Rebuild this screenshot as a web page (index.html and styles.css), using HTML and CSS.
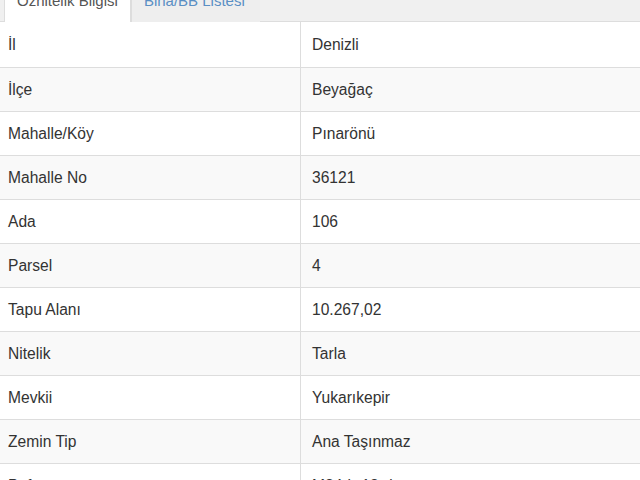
FILE: index.html
```html
<!DOCTYPE html>
<html lang="tr">
<head>
<meta charset="utf-8">
<title>Öznitelik Bilgisi</title>
<link rel="stylesheet" href="styles.css">
</head>
<body>
<nav class="tabs">
  <a class="tab active">Öznitelik Bilgisi</a>
  <a class="tab">Bina/BB Listesi</a>
</nav>
<div class="table">
  <div class="row"><div class="cell key">İl</div><div class="cell val">Denizli</div></div>
  <div class="row"><div class="cell key">İlçe</div><div class="cell val">Beyağaç</div></div>
  <div class="row"><div class="cell key">Mahalle/Köy</div><div class="cell val">Pınarönü</div></div>
  <div class="row"><div class="cell key">Mahalle No</div><div class="cell val">36121</div></div>
  <div class="row"><div class="cell key">Ada</div><div class="cell val">106</div></div>
  <div class="row"><div class="cell key">Parsel</div><div class="cell val">4</div></div>
  <div class="row"><div class="cell key">Tapu Alanı</div><div class="cell val">10.267,02</div></div>
  <div class="row"><div class="cell key">Nitelik</div><div class="cell val">Tarla</div></div>
  <div class="row"><div class="cell key">Mevkii</div><div class="cell val">Yukarıkepir</div></div>
  <div class="row"><div class="cell key">Zemin Tip</div><div class="cell val">Ana Taşınmaz</div></div>
  <div class="row"><div class="cell key">Pafta</div><div class="cell val">M24-b-13-d</div></div>
</div>
</body>
</html>
```
FILE: styles.css
```css
html, body {
  margin: 0;
  padding: 0;
  background: #ffffff;
  overflow: hidden;
}
body {
  font-family: "Liberation Sans", Arial, sans-serif;
  font-size: 15.6px;
  color: #333333;
}
.tabs {
  display: flex;
  align-items: flex-end;
  margin-top: -20px;
  padding-left: 4px;
  background: #f0f0f0;
  border-bottom: 1px solid #dddddd;
}
.tab {
  display: block;
  padding: 10px 12px 11px;
  line-height: 20px;
  font-size: 15px;
  border: 1px solid transparent;
  border-bottom: 0;
  margin-bottom: -1px;
  color: #5a8fc4;
  background: #eeeeee;
}
.tab.active {
  color: #555555;
  background: #ffffff;
  border-color: #dddddd;
}
.tab + .tab {
  border-left-color: #dddddd;
  padding-right: 14px;
}
.table {
  display: flex;
  flex-direction: column;
}
.row {
  display: grid;
  grid-template-columns: 301px 1fr;
  border-bottom: 1px solid #dddddd;
}
.row:nth-child(even) {
  background: #f9f9f9;
}
.cell {
  height: 43px;
  line-height: 43px;
  white-space: nowrap;
}
.row:first-child .cell {
  height: 45px;
  line-height: 45px;
}
.key {
  padding-left: 8px;
  border-right: 1px solid #dddddd;
}
.val {
  padding-left: 11px;
}
```
